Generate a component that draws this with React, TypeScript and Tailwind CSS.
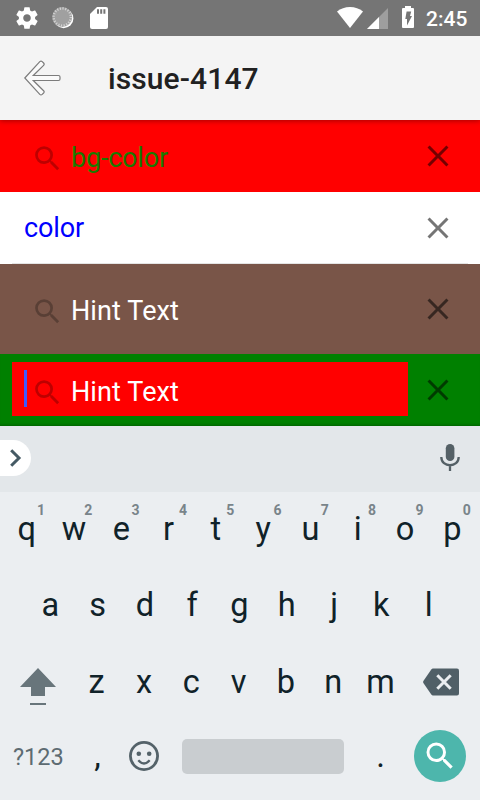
import React from "react";

const SEARCH_PATH =
  "M15.5 14h-.79l-.28-.27A6.471 6.471 0 0 0 16 9.5 6.5 6.5 0 1 0 9.5 16c1.61 0 3.09-.59 4.23-1.57l.27.28v.79l5 4.99L20.49 19l-4.99-5zm-6 0C7.01 14 5 11.99 5 9.5S7.01 5 9.5 5 14 7.01 14 9.5 11.99 14 9.5 14z";
const CLOSE_PATH =
  "M19 6.41L17.59 5 12 10.59 6.41 5 5 6.41 10.59 12 5 17.59 6.41 19 12 13.41 17.59 19 19 17.59 13.41 12z";
const GEAR_PATH =
  "M19.43 12.98c.04-.32.07-.64.07-.98s-.03-.66-.07-.98l2.11-1.65c.19-.15.24-.42.12-.64l-2-3.46c-.12-.22-.39-.3-.61-.22l-2.49 1c-.52-.4-1.08-.73-1.69-.98l-.38-2.65A.488.488 0 0 0 14 2h-4c-.25 0-.46.18-.49.42l-.38 2.65c-.61.25-1.17.59-1.69.98l-2.49-1c-.23-.09-.49 0-.61.22l-2 3.46c-.13.22-.07.49.12.64l2.11 1.65c-.04.32-.07.65-.07.98s.03.66.07.98l-2.11 1.65c-.19.15-.24.42-.12.64l2 3.46c.12.22.39.3.61.22l2.49-1c.52.4 1.08.73 1.69.98l.38 2.65c.03.24.24.42.49.42h4c.25 0 .46-.18.49-.42l.38-2.65c.61-.25 1.17-.59 1.69-.98l2.49 1c.23.09.49 0 .61-.22l2-3.46c.12-.22.07-.49-.12-.64l-2.11-1.65zM12 15.5c-1.93 0-3.5-1.57-3.5-3.5s1.57-3.5 3.5-3.5 3.5 1.57 3.5 3.5-1.57 3.5-3.5 3.5z";

function SearchIcon({ className }: { className: string }) {
  return (
    <svg viewBox="0 0 24 24" fill="currentColor" className={className}>
      <path d={SEARCH_PATH} />
    </svg>
  );
}

function CloseIcon() {
  return (
    <svg viewBox="0 0 24 24" fill="currentColor" className="mr-6 size-9 shrink-0 text-black/54">
      <path d={CLOSE_PATH} />
    </svg>
  );
}

function StatusBar() {
  return (
    <header className="relative z-20 flex h-9 items-center bg-[#757575] text-white">
      <svg viewBox="0 0 24 24" fill="currentColor" className="ml-3.5 size-[26px]">
        <path d={GEAR_PATH} />
      </svg>
      <svg viewBox="0 0 24 24" className="ml-[11px] size-6">
        <circle cx="12.6" cy="12.4" r="9.8" fill="#fff" />
        <circle cx="11.2" cy="11" r="10" fill="#a0a0a0" />
        <circle cx="11.2" cy="11" r="8.6" fill="none" stroke="#d2d2d2" strokeWidth="2.4" strokeDasharray="1.2 1.5" />
      </svg>
      <svg viewBox="0 0 18 22" className="ml-[15px] h-[22px] w-[18px]">
        <path d="M7 0h9a2 2 0 0 1 2 2v18a2 2 0 0 1-2 2H2a2 2 0 0 1-2-2V7z" fill="#fff" />
        <path d="M7 2.3h2v4.4H7zM10.2 2.3h2v4.4h-2zM13.4 2.3h2v4.4h-2z" fill="#757575" />
      </svg>
      <svg viewBox="0 0 26 21" className="mb-px ml-auto h-[21px] w-[26px]">
        <path d="M13 21 0 4.600Q5.500 0 13 0T26 4.600z" fill="#fff" />
      </svg>
      <svg viewBox="0 0 21 21" className="ml-1 h-[21px] w-[21px]">
        <path d="M0 21 21 0V21z" fill="#fff" fillOpacity=".3" />
        <path d="M0 21 12 9V21z" fill="#fff" />
      </svg>
      <svg viewBox="0 0 12 22" className="mb-0.5 ml-3.5 h-[22px] w-3">
        <path d="M3 0h6v2h2a1 1 0 0 1 1 1v18a1 1 0 0 1-1 1H1a1 1 0 0 1-1-1V3a1 1 0 0 1 1-1h2z" fill="#fff" />
        <path d="M4.600 5.500h4.600L8 10h2L5 19.500V13H3.300z" fill="#757575" />
      </svg>
      <span className="mt-0.5 mr-3 ml-3 w-[42px] text-[21px] leading-6 font-medium whitespace-nowrap">2:45</span>
    </header>
  );
}

function ActionBar() {
  return (
    <div className="relative z-10 flex h-[84px] items-center bg-[#f4f4f4] shadow-[0_1px_5px_rgba(0,0,0,0.35)]">
      <svg viewBox="0 0 38 36" className="ml-6 h-9 w-[38px]">
        <path
          d="M.8 18 15.800 1.600Q17 .5 18.200 1.600L19.600 3Q20.700 4.200 19.600 5.300L9.300 15.500H34.500Q36 15.500 36 17V19Q36 20.500 34.500 20.500H9.300L19.600 30.700Q20.700 31.800 19.600 33L18.200 34.400Q17 35.500 15.800 34.400Z"
          fill="#fafafa"
          stroke="#7c7c7c"
          strokeWidth="1.2"
        />
      </svg>
      <h1 className="mt-0.5 ml-[46px] text-[30px] leading-9 font-medium tracking-[0.1px] text-[#212121]">issue-4147</h1>
    </div>
  );
}

function HintField({ text, className }: { text: string; className: string }) {
  return (
    <div className={"flex flex-1 items-start " + className}>
      <SearchIcon className="mt-0.5 ml-[31px] size-[33px] shrink-0 text-black/26" />
      <span className="ml-[7px] text-[27px] leading-9">{text}</span>
    </div>
  );
}

function SearchBars() {
  return (
    <main>
      <div className="flex h-[72px] items-center bg-[#ff0000]">
        <HintField text="bg-color" className="pt-1 tracking-[-0.2px] text-[#1a7a00]" />
        <CloseIcon />
      </div>
      <div className="flex h-[72px] flex-col bg-white">
        <div className="flex h-[71px] items-center pt-px">
          <span className="ml-6 flex-1 text-[27px] leading-9 tracking-[-0.1px] text-[#0000ff]">color</span>
          <CloseIcon />
        </div>
        <div className="mx-3 h-px bg-[#e4e4e4]" />
      </div>
      <div className="flex h-[90px] items-center bg-[#795548]">
        <HintField text="Hint Text" className="pt-1 tracking-[0.1px] text-white" />
        <CloseIcon />
      </div>
      <div className="flex h-[72px] items-start bg-[#008000] pt-2 shadow-[inset_0_-3px_3px_-2px_rgba(0,0,0,0.25)]">
        <div className="relative ml-3 flex h-[54px] w-[396px] bg-[#ff0000]">
          <div className="absolute top-2 left-3 h-[37px] w-[3px] bg-[#3d5afe]" />
          <div className="-ml-3 flex flex-1">
            <HintField text="Hint Text" className="pt-3 tracking-[0.1px] text-white" />
          </div>
        </div>
        <div className="mt-2.5 ml-3 flex">
          <CloseIcon />
        </div>
      </div>
    </main>
  );
}

function Key({ label, hint }: { label: string; hint?: string }) {
  return (
    <div className="relative w-[47.3px] text-center text-[32.5px] leading-[75px] text-[#102229]">
      {label}
      {hint && (
        <span className="absolute top-[10px] left-[34px] text-[14px] leading-4 font-bold text-[#79848a]">
          {hint}
        </span>
      )}
    </div>
  );
}

function Keyboard() {
  return (
    <section className="bg-[#ebeef1]">
      <div className="flex h-[66px] items-center justify-between bg-[#e3e7ea]">
        <div className="mb-0.5 flex h-9 w-[31px] items-center rounded-r-full bg-white">
          <svg viewBox="0 0 12 18" className="ml-2.5 h-[18px] w-3">
            <path d="M1.200 1.200 9 9l-7.800 7.800" fill="none" stroke="#455a64" strokeWidth="3" />
          </svg>
        </div>
        <svg viewBox="0 0 20 27" className="mr-5 mb-[3px] h-[27px] w-5">
          <rect x="5.800" y="0" width="8.600" height="17" rx="4.300" fill="#546066" />
          <path d="M1.300 13c0 11 17.400 11 17.400 0M10 21v6" fill="none" stroke="#546066" strokeWidth="2.300" />
        </svg>
      </div>
      <div className="flex h-[76px] pl-[3px]">
        {"qwertyuiop".split("").map((c, i) => (
          <Key key={c} label={c} hint={String((i + 1) % 10)} />
        ))}
      </div>
      <div className="flex h-[76px] pl-[26.600px]">
        {"asdfghjkl".split("").map((c) => (
          <Key key={c} label={c} />
        ))}
      </div>
      <div className="flex h-[76px] items-center">
        <svg viewBox="0 0 36 38" className="mt-[9px] mr-[17px] ml-5 h-[38px] w-9">
          <path d="M18 0 36 19H25V28H11V19H0z" fill="#68757b" />
          <path d="M10 35h16v2H10z" fill="#68757b" />
        </svg>
        {"zxcvbnm".split("").map((c) => (
          <Key key={c} label={c} />
        ))}
        <svg viewBox="0 0 36 28" className="ml-[19px] h-7 w-9">
          <path d="M10 .5H34Q36 .5 36 2.500V25.500Q36 27.500 34 27.500H10Q9 27.500 8.300 26.500L.4 15Q-.2 14 .4 13L8.300 1.500Q9 .5 10 .5Z" fill="#505f67" />
          <path d="m14.300 7.300 13.400 13.400m0-13.400L14.300 20.700" stroke="#ebeef1" strokeWidth="3" />
        </svg>
      </div>
      <div className="flex h-[72px] items-center text-[#102229]">
        <span className="mt-0.5 ml-[13px] w-[51px] text-[23.500px] leading-8 whitespace-nowrap text-[#5d6b72]">?123</span>
        <span className="ml-2.5 w-[47px] text-center text-[33px] leading-10">,</span>
        <svg viewBox="0 0 30 30" className="ml-2 size-[30px]">
          <circle cx="15" cy="15" r="13.600" fill="none" stroke="#546269" strokeWidth="2.800" />
          <circle cx="9.800" cy="12.700" r="2.300" fill="#546269" />
          <circle cx="20.200" cy="12.700" r="2.300" fill="#546269" />
          <path d="M9.300 19.300q5.700 6.400 11.400 0" fill="none" stroke="#546269" strokeWidth="2.300" />
        </svg>
        <div className="ml-[23px] h-[35px] w-[162px] rounded-[5px] bg-[#c9cdd0]" />
        <span className="ml-[13px] w-[47px] text-center text-[33px] leading-10">.</span>
        <div className="mb-px ml-[10px] flex size-[52px] items-center justify-center rounded-full bg-[#4db6ac]">
          <SearchIcon className="size-9 text-white" />
        </div>
      </div>
      <div className="h-2" />
    </section>
  );
}

export default function App() {
  return (
    <div className="h-[800px] w-[480px] overflow-hidden font-['Roboto',sans-serif]">
      <StatusBar />
      <ActionBar />
      <SearchBars />
      <Keyboard />
    </div>
  );
}
